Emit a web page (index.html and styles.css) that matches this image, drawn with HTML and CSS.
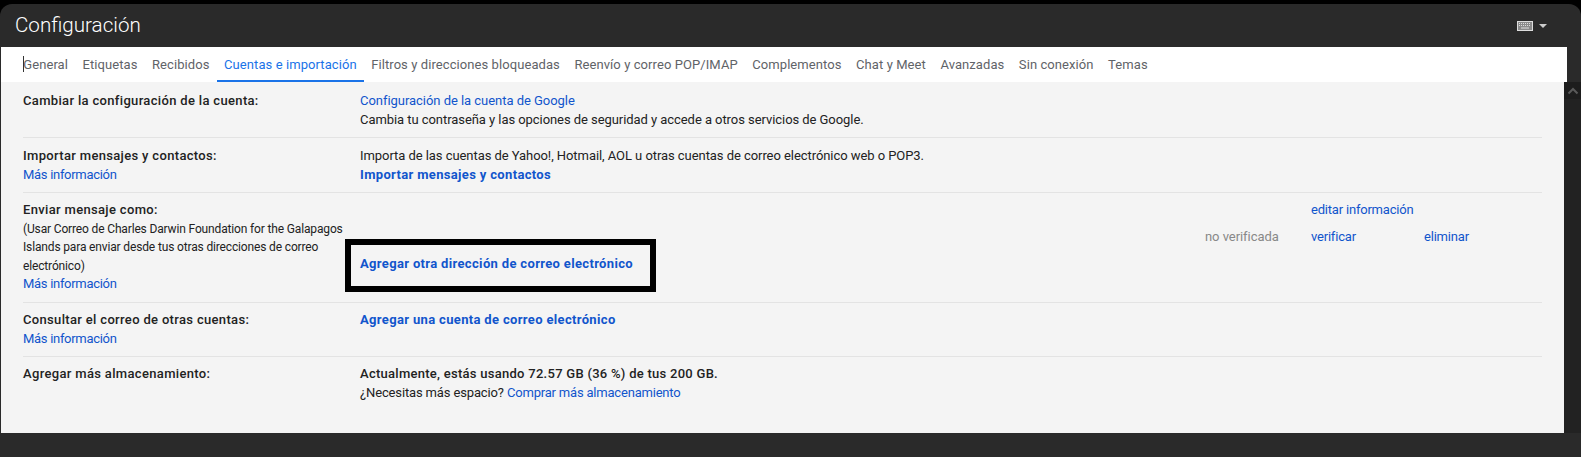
FILE: index.html
```html
<!DOCTYPE html>
<html lang="es">
<head>
    <meta charset="UTF-8">
    <meta name="viewport" content="width=device-width, initial-scale=1.0">
    <title>Configuración</title>
    <link rel="stylesheet" href="styles.css">
</head>
<body>
    <div class="window">
        <header class="topbar">
            <h1>Configuración</h1>
            <div class="input-tools">
                <svg class="keyboard" width="16" height="10" viewBox="0 0 16 10">
                    <rect x="0.5" y="0.5" width="15" height="9" fill="#8a8a8a" stroke="#ddd"/>
                    <path d="M2 2.5h12M2 4.5h12" stroke="#ddd" stroke-dasharray="1 1" fill="none"/>
                    <path d="M4 7h8" stroke="#ddd" fill="none"/>
                </svg>
                <span class="caret-down"></span>
            </div>
        </header>

        <nav class="tabs">
            <a class="tab tab-first">General</a>
            <a class="tab">Etiquetas</a>
            <a class="tab">Recibidos</a>
            <a class="tab active">Cuentas e importación</a>
            <a class="tab">Filtros y direcciones bloqueadas</a>
            <a class="tab">Reenvío y correo POP/IMAP</a>
            <a class="tab">Complementos</a>
            <a class="tab">Chat y Meet</a>
            <a class="tab">Avanzadas</a>
            <a class="tab">Sin conexión</a>
            <a class="tab">Temas</a>
        </nav>

        <div class="body-area">
            <main class="panel">
                <section class="row row-account">
                    <div class="label">
                        <strong>Cambiar la configuración de la cuenta:</strong>
                    </div>
                    <div class="value">
                        <a class="link-wide">Configuración de la cuenta de Google</a><br>
                        Cambia tu contraseña y las opciones de seguridad y accede a otros servicios de Google.
                    </div>
                </section>

                <section class="row row-import">
                    <div class="label">
                        <strong>Importar mensajes y contactos:</strong><br>
                        <a class="more">Más información</a>
                    </div>
                    <div class="value">
                        Importa de las cuentas de Yahoo!, Hotmail, AOL u otras cuentas de correo electrónico web o POP3.<br>
                        <a class="link-strong">Importar mensajes y contactos</a>
                    </div>
                </section>

                <section class="row row-send">
                    <div class="label">
                        <strong>Enviar mensaje como:</strong>
                        <p class="note">(Usar Correo de Charles Darwin Foundation for the Galapagos Islands para enviar desde tus otras direcciones de correo electrónico)</p>
                        <a class="more">Más información</a>
                    </div>
                    <div class="value send-grid">
                        <span></span>
                        <span></span>
                        <a class="send-edit">editar información</a>
                        <span></span>
                        <span></span>
                        <span class="status">no verificada</span>
                        <a>verificar</a>
                        <a>eliminar</a>
                        <div class="send-add">
                            <a class="link-strong">Agregar otra dirección de correo electrónico</a>
                        </div>
                    </div>
                </section>

                <section class="row">
                    <div class="label">
                        <strong>Consultar el correo de otras cuentas:</strong><br>
                        <a class="more">Más información</a>
                    </div>
                    <div class="value">
                        <a class="link-strong">Agregar una cuenta de correo electrónico</a>
                    </div>
                </section>

                <section class="row row-last">
                    <div class="label">
                        <strong>Agregar más almacenamiento:</strong>
                    </div>
                    <div class="value">
                        <strong>Actualmente, estás usando 72.57 GB (36 %) de tus 200 GB.</strong><br>
                        <span class="hint">¿Necesitas más espacio?</span> <a>Comprar más almacenamiento</a>
                    </div>
                </section>

                <div class="highlight"></div>
            </main>
            <aside class="scrollbar">
                <div class="scroll-up">
                    <svg width="12" height="8" viewBox="0 0 12 8">
                        <path d="M1.5 6.5L6 2l4.5 4.5" fill="none" stroke="#5a5a5a" stroke-width="2"/>
                    </svg>
                </div>
            </aside>
        </div>
    </div>
</body>
</html>
```

FILE: styles.css
```css
* {
    box-sizing: border-box;
}

body {
    margin: 0;
    background-color: #000;
    font-family: Roboto, "Liberation Sans", sans-serif;
    font-size: 13px;
    line-height: 18.5px;
    color: #222;
    overflow: hidden;
}

.window {
    height: 453px;
    margin-top: 4px;
    background-color: #2a2a2a;
    border-radius: 12px 12px 0 0;
    overflow: hidden;
    display: flex;
    flex-direction: column;
}

/* Dark title bar */
.topbar {
    height: 43px;
    flex: none;
    display: flex;
    align-items: center;
    justify-content: space-between;
    padding: 0 34px 0 15px;
}

.topbar h1 {
    margin: 0;
    font-size: 20.6px;
    font-weight: 300;
    color: #fff;
}

.input-tools {
    display: flex;
    align-items: center;
    gap: 6px;
}

.keyboard {
    display: block;
}

.caret-down {
    width: 0;
    height: 0;
    border-left: 4px solid transparent;
    border-right: 4px solid transparent;
    border-top: 4px solid #ccc;
}

/* Tabs */
.tabs {
    height: 35px;
    flex: none;
    margin: 0 14px 0 1px;
    padding-left: 15px;
    background-color: #fff;
    display: flex;
}

.tab {
    padding: 1px 7.25px 0;
    line-height: 34px;
    color: #5f6368;
    letter-spacing: 0.08px;
    white-space: nowrap;
    border-bottom: 2px solid transparent;
}

.tab.active {
    color: #1a73e8;
    border-bottom-color: #1a73e8;
}

.tab-first {
    position: relative;
}

/* Text cursor in front of General */
.tab-first::before {
    content: "";
    position: absolute;
    left: 7px;
    top: 9px;
    width: 1px;
    height: 16px;
    background-color: #333;
}

/* Settings content */
.body-area {
    flex: 1;
    display: flex;
    align-items: flex-start;
    padding-left: 1px;
}

.panel {
    position: relative;
    flex: 1;
    height: 351px;
    padding: 0 22px;
    background-color: #f4f4f4;
}

.row {
    display: grid;
    grid-template-columns: 337px 1fr;
    padding: 8px 0;
    border-bottom: 1px solid #e3e3e3;
}

.row-account {
    padding: 10px 0 8px;
}

.row-import {
    padding: 9px 0 8px;
}

.row-send {
    padding: 8px 0 8.5px;
}

.row-last {
    border-bottom: none;
}

.label {
    width: 330px;
}

strong {
    font-weight: 500;
    letter-spacing: 0.33px;
}

.value strong {
    letter-spacing: 0.27px;
}

a {
    color: #1155cc;
    letter-spacing: -0.2px;
}

.link-wide {
    letter-spacing: -0.04px;
}

.more {
    letter-spacing: -0.3px;
}

.link-strong {
    font-weight: 700;
    letter-spacing: 0.34px;
}

.hint {
    letter-spacing: -0.14px;
}

.note {
    margin: 0;
    font-size: 12px;
    letter-spacing: -0.15px;
}

.value {
    letter-spacing: -0.06px;
}

.send-grid {
    display: grid;
    grid-template-columns: 845px 106px 113px 1fr;
    grid-auto-rows: 18px;
    row-gap: 9px;
    align-content: start;
}

.send-add {
    grid-column: 1 / -1;
}

.status {
    color: #888;
}

/* Annotation box drawn over the screenshot */
.highlight {
    position: absolute;
    left: 344px;
    top: 157px;
    width: 311px;
    height: 53px;
    border: 6px solid #000;
}

.scrollbar {
    width: 17px;
    height: 351px;
    flex: none;
    background-color: #222;
}

.scroll-up {
    height: 17px;
    background-color: #1d1d1d;
    display: flex;
    align-items: center;
    justify-content: center;
}
```
